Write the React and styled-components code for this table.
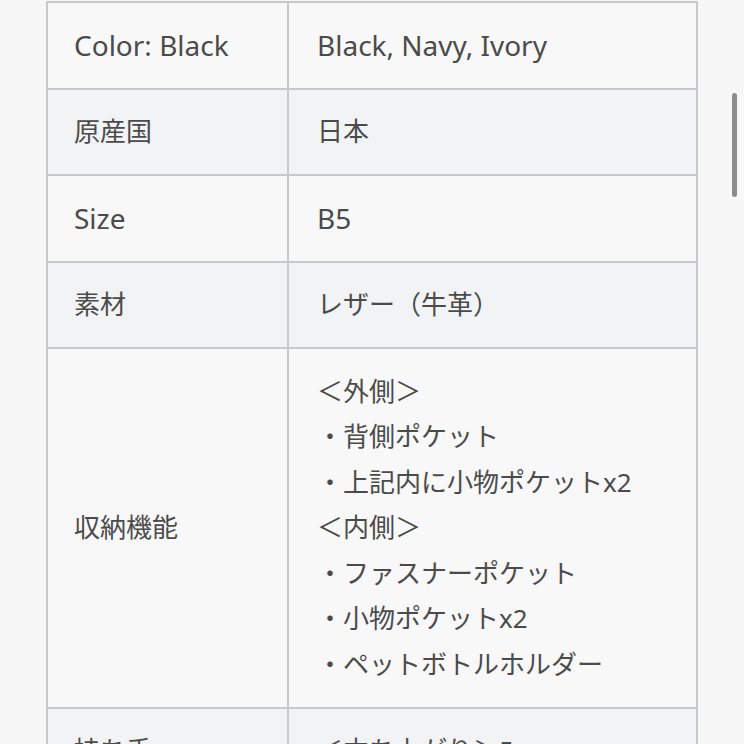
import React from "react";
import styled, { createGlobalStyle } from "styled-components";

const Global = createGlobalStyle`
  html, body { margin: 0; padding: 0; background: #f7f7f7; }
  body {
    font-family: "Noto Sans", "Noto Sans CJK JP", sans-serif;
    color: #4b4b4b;
    -webkit-font-smoothing: antialiased;
  }
`;

const Page = styled.div`
  position: relative;
  height: 744px;
  overflow: hidden;
  padding-top: 1px;
  box-sizing: border-box;
`;

const Table = styled.div`
  margin-left: 46px;
  width: 652px;
  box-sizing: border-box;
  display: grid;
  grid-template-columns: 241px 409px;
  border-left: 2px solid #c8c8ca;
  border-top: 2px solid #c8c8ca;
`;

const Cell = styled.div`
  box-sizing: border-box;
  display: flex;
  flex-direction: column;
  justify-content: center;
  padding: 19.5px 16px 19.5px ${(p) => (p.$value ? "28px" : "26px")};
  border-right: 2px solid #c8c8ca;
  border-bottom: 2px solid #c8c8ca;
  background: ${(p) => (p.$alt ? "#f2f3f5" : "#f8f8f8")};
  font-size: ${(p) => (p.$latin ? "28px" : "26px")};
  line-height: 45.5px;
  white-space: nowrap;
`;

const Line = styled.div``;

const Thumb = styled.div`
  position: absolute;
  left: 732px;
  top: 93px;
  width: 5px;
  height: 104px;
  border-radius: 3px;
  background: #8d8d8d;
`;

const rows = [
  { label: "Color: Black", value: ["Black, Navy, Ivory"], latin: true },
  { label: "原産国", value: ["日本"] },
  { label: "Size", value: ["B5"], latin: true },
  { label: "素材", value: ["レザー（牛革）"] },
  {
    label: "収納機能",
    value: [
      "＜外側＞",
      "・背側ポケット",
      "・上記内に小物ポケットx2",
      "＜内側＞",
      "・ファスナーポケット",
      "・小物ポケットx2",
      "・ペットボトルホルダー",
    ],
  },
  { label: "持ち手", value: ["＜立ち上がり＞5cm"] },
];

export default function App() {
  return (
    <>
      <Global />
      <Page>
        <Table>
          {rows.map((r, i) => (
            <React.Fragment key={r.label}>
              <Cell $alt={i % 2 === 1} $latin={r.latin}>
                {r.label}
              </Cell>
              <Cell $value $alt={i % 2 === 1} $latin={r.latin}>
                {r.value.map((v) => (
                  <Line key={v}>{v}</Line>
                ))}
              </Cell>
            </React.Fragment>
          ))}
        </Table>
        <Thumb />
      </Page>
    </>
  );
}
